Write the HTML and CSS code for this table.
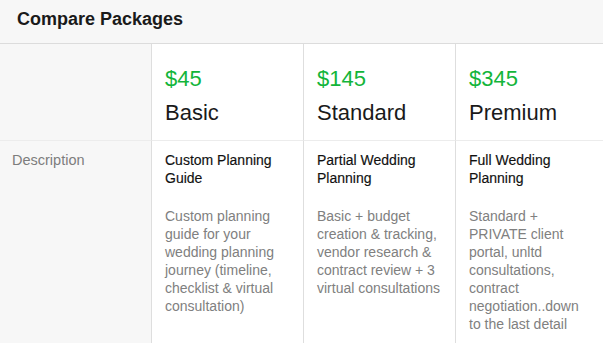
FILE: index.html
```html
<!DOCTYPE html>
<html lang="en">
<head>
    <meta charset="UTF-8">
    <meta name="viewport" content="width=device-width, initial-scale=1.0">
    <title>Compare Packages</title>
    <link rel="stylesheet" href="styles.css">
</head>
<body>
    <div class="compare">
        <div class="compare-header">
            <h2>Compare Packages</h2>
        </div>

        <!-- Package names and prices -->
        <div class="row row-head">
            <div class="cell label-cell"></div>
            <div class="cell">
                <div class="price">$45</div>
                <div class="name">Basic</div>
            </div>
            <div class="cell">
                <div class="price">$145</div>
                <div class="name">Standard</div>
            </div>
            <div class="cell">
                <div class="price">$345</div>
                <div class="name">Premium</div>
            </div>
        </div>

        <!-- Description row -->
        <div class="row row-desc">
            <div class="cell label-cell">
                <span class="label">Description</span>
            </div>
            <div class="cell">
                <div class="title">Custom Planning Guide</div>
                <p class="text">Custom planning guide for your wedding planning journey (timeline, checklist &amp; virtual consultation)</p>
            </div>
            <div class="cell">
                <div class="title">Partial Wedding Planning</div>
                <p class="text">Basic + budget creation &amp; tracking, vendor research &amp; contract review + 3 virtual consultations</p>
            </div>
            <div class="cell">
                <div class="title">Full Wedding Planning</div>
                <p class="text">Standard + PRIVATE client portal, unltd consultations, contract negotiation..down to the last detail</p>
            </div>
        </div>
    </div>
</body>
</html>
```

FILE: styles.css
```css
* {
    box-sizing: border-box;
}
body {
    font-family: "Liberation Sans", Arial, sans-serif;
    background-color: #fff;
    margin: 0;
    padding: 0;
    overflow: hidden;
}
.compare {
    width: 608px;
}
.compare-header {
    height: 44px;
    background-color: #f7f7f7;
    border-bottom: 1px solid #dcdcdc;
}
.compare-header h2 {
    margin: 0;
    padding: 8px 17px 0;
    font-size: 18px;
    line-height: 22px;
    font-weight: bold;
    color: #1a1a1a;
}
.row {
    display: grid;
    grid-template-columns: repeat(4, 152px);
}
.cell {
    border-right: 1px solid #dedede;
    padding: 0 13px;
}
.label-cell {
    background-color: #f7f7f7;
    padding: 0 12px;
}
.row-head .cell {
    height: 97px;
    padding-top: 21px;
    border-bottom: 1px solid #ececec;
}
.price {
    font-size: 22px;
    line-height: 28px;
    color: #13b53a;
}
.name {
    margin-top: 6px;
    font-size: 22px;
    line-height: 28px;
    color: #1a1a1a;
}
.row-desc .cell {
    padding-top: 10px;
    height: 202px;
}
.label {
    font-size: 14.5px;
    line-height: 18px;
    color: #7d7d7d;
}
.title {
    font-size: 14px;
    line-height: 18px;
    color: #111;
    -webkit-text-stroke: 0.15px #111;
}
.text {
    margin: 20px 0 0;
    font-size: 14px;
    line-height: 18px;
    color: #808080;
}
```
